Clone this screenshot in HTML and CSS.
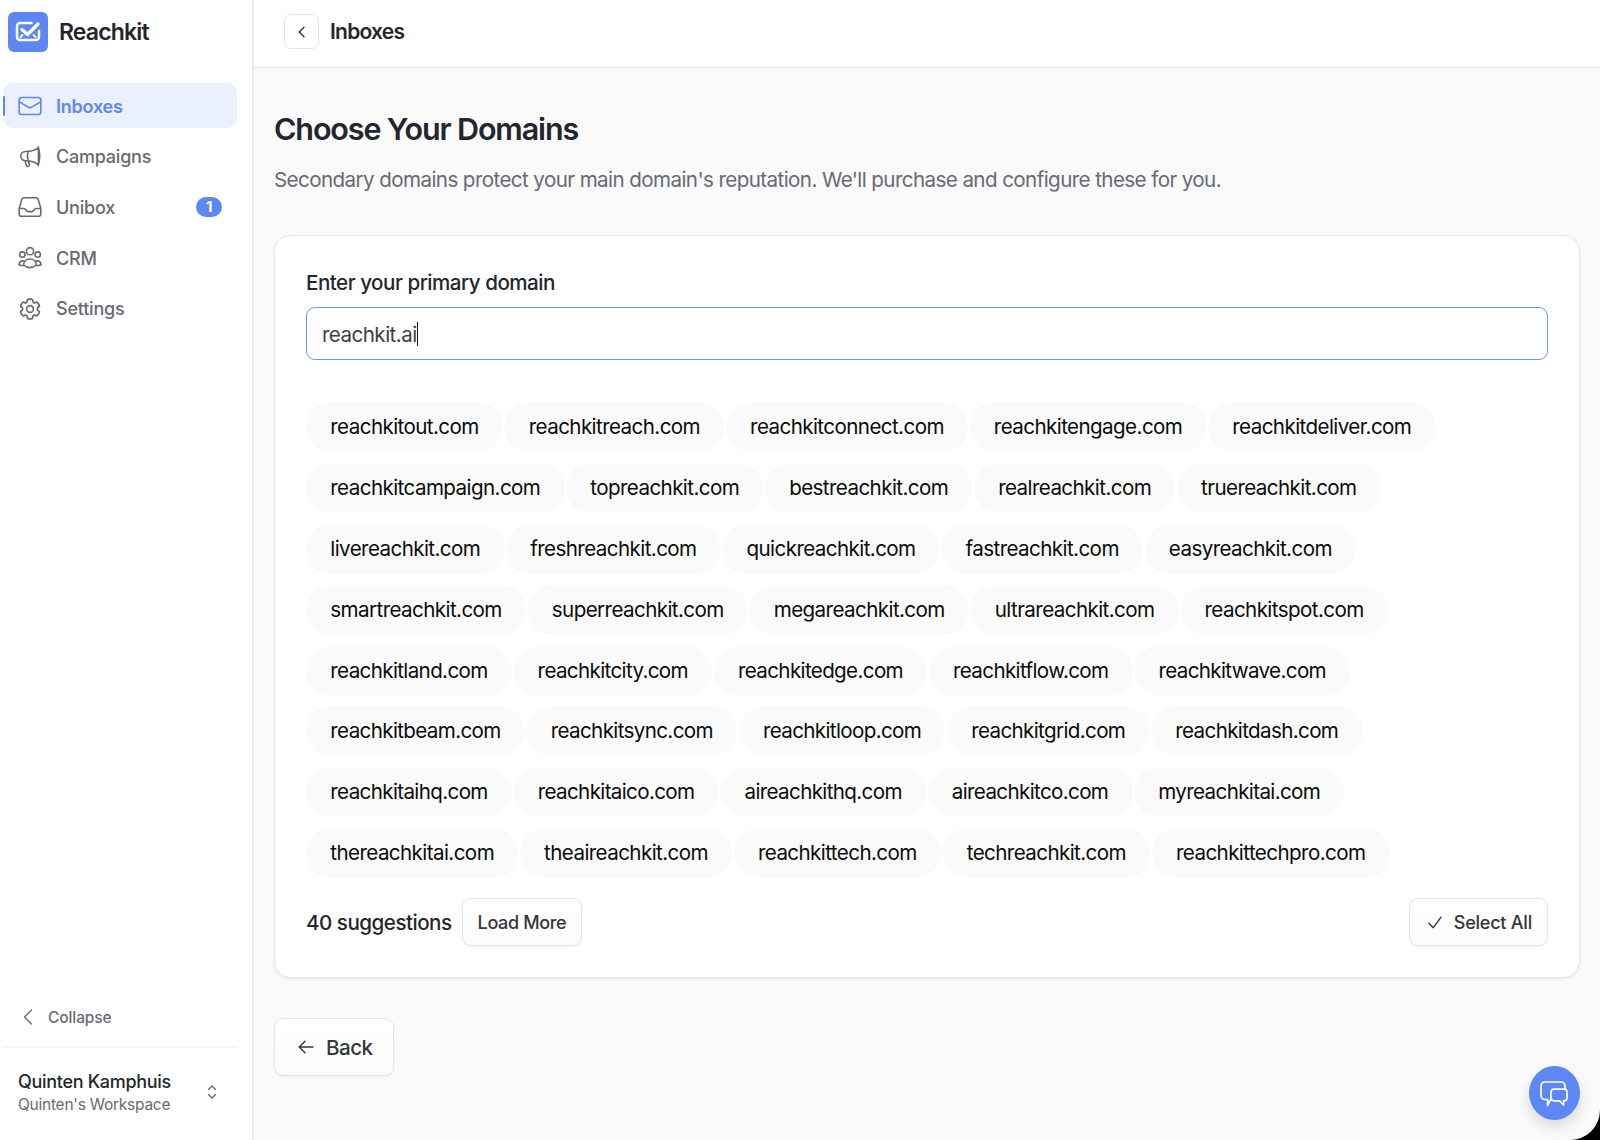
FILE: index.html
```html
<!DOCTYPE html>
<html lang="en">
<head>
    <meta charset="UTF-8">
    <meta name="viewport" content="width=device-width, initial-scale=1.0">
    <title>Reachkit - Inboxes</title>
    <link rel="stylesheet" href="styles.css">
</head>
<body>
    <div class="app">
        <!-- Sidebar -->
        <aside class="sidebar">
            <div class="brand">
                <span class="brand-logo">
                    <svg width="26" height="22" viewBox="0 0 26 22">
                        <path d="M16.500 2H5a3 3 0 0 0-3 3v11a3 3 0 0 0 3 3h16a3 3 0 0 0 3-3V10"/>
                        <path class="check" d="M7 8.500l5.500 5L23 3"/>
                        <path class="fold" d="M5.500 16l2-2M20.500 16l-2-2"/>
                    </svg>
                </span>
                <span class="brand-name">Reachkit</span>
            </div>

            <nav class="nav">
                <a class="nav-item active">
                    <svg class="icon" viewBox="0 0 24 24"><rect x="1.200" y="3.500" width="21.600" height="17" rx="2.500"/><path d="M1.200 7.800l9.100 5.300a3.300 3.300 0 0 0 3.400 0l9.100-5.300"/></svg>
                    <span>Inboxes</span>
                </a>
                <a class="nav-item">
                    <svg class="icon" viewBox="0 0 24 24"><path d="M10.300 15.800c-.7-.1-1.400-.1-2.100-.1h-.8a4.600 4.600 0 0 1 0-9.200h.8c4.400 0 8.600-1.300 12.300-3.700v16.700a22.500 22.500 0 0 0-10.200-3.700zM10.300 15.800c-1-3-1-6.500 0-9.400M7.200 15.700c.2 1.900.7 3.500 1.300 5 .3.700 1 1 1.600.6l.8-.4c.5-.3.7-.9.5-1.500-.5-1.100-.8-2.300-1.100-3.600M20.200 1.800c1.900 5.900 1.900 12.800 0 18.800"/></svg>
                    <span>Campaigns</span>
                </a>
                <a class="nav-item">
                    <svg class="icon" viewBox="0 0 24 24"><path d="M1.200 13.500h4.600c.9 0 1.700.5 2.100 1.300l.3.600c.4.800 1.200 1.200 2.100 1.200h3.400c.9 0 1.700-.4 2.100-1.200l.3-.6c.4-.8 1.200-1.300 2.100-1.300h4.600M1.200 13.800v5.100c0 1.300 1 2.300 2.300 2.300h17c1.300 0 2.300-1 2.300-2.300v-5.100c0-.3 0-.5-.1-.7L20.200 4.400A2.400 2.400 0 0 0 18 2.800H6a2.400 2.400 0 0 0-2.200 1.600l-2.500 8.700-.1.700z"/></svg>
                    <span>Unibox</span>
                    <span class="badge">1</span>
                </a>
                <a class="nav-item">
                    <svg class="icon" viewBox="0 0 24 24"><circle cx="12" cy="5.200" r="3.600"/><circle cx="4.300" cy="8.600" r="2.700"/><circle cx="19.700" cy="8.600" r="2.700"/><path d="M5.600 19c0-3.600 2.800-6 6.400-6s6.400 2.400 6.400 6c-4 3.200-8.800 3.200-12.800 0zM6.800 15.600c-2.900-1.700-5.600-.2-5.900 3.100 1.800.9 3.200 1.100 4.800.6M17.200 15.600c2.900-1.700 5.600-.2 5.900 3.100-1.800.9-3.200 1.100-4.800.6"/></svg>
                    <span>CRM</span>
                </a>
                <a class="nav-item">
                    <svg class="icon" viewBox="0 0 24 24"><path d="M9.600 3.900c.1-.5.500-.9 1.100-.9h2.600c.5 0 1 .4 1.100.9l.2 1.300c.1.400.3.700.6.900l.2.100c.4.200.8.200 1.100.1l1.200-.5c.5-.2 1.100 0 1.400.5l1.300 2.200c.3.500.2 1.100-.3 1.400l-1 .8c-.3.300-.4.600-.4 1v.3c0 .4.100.7.400 1l1 .8c.4.400.5 1 .3 1.400l-1.300 2.300c-.3.500-.9.700-1.400.5l-1.200-.5c-.4-.1-.8-.1-1.100.1l-.2.100c-.3.200-.5.500-.6.900l-.2 1.300c-.1.500-.5.900-1.100.9h-2.600c-.5 0-1-.4-1.100-.9l-.2-1.300c-.1-.4-.3-.7-.6-.9l-.2-.1c-.4-.2-.8-.2-1.100-.1l-1.200.5c-.5.200-1.100 0-1.400-.5l-1.300-2.300c-.3-.5-.2-1.100.3-1.400l1-.8c.3-.3.4-.6.4-1v-.3c0-.4-.1-.7-.4-1l-1-.8c-.4-.4-.5-1-.3-1.400l1.300-2.200c.3-.5.900-.7 1.400-.5l1.200.5c.4.100.8.100 1.100-.1l.2-.1c.3-.2.500-.5.600-.9z" transform="translate(-1.200 -1.100) scale(1.100)"/><circle cx="12" cy="12" r="3.400"/></svg>
                    <span>Settings</span>
                </a>
            </nav>

            <div class="sidebar-bottom">
                <a class="collapse">
                    <svg width="10" height="16" viewBox="0 0 10 16"><path d="M8.500 1L1.500 8l7 7"/></svg>
                    <span>Collapse</span>
                </a>
                <div class="account">
                    <div class="account-text">
                        <div class="account-name">Quinten Kamphuis</div>
                        <div class="account-workspace">Quinten's Workspace</div>
                    </div>
                    <svg width="10" height="14" viewBox="0 0 10 14"><path d="M1.500 4.500L5 1l3.500 3.500M1.500 9.500L5 13l3.500-3.500"/></svg>
                </div>
            </div>
        </aside>

        <!-- Main -->
        <main class="main">
            <header class="topbar">
                <button class="topbar-back">
                    <svg width="8" height="12" viewBox="0 0 8 12"><path d="M6 1.200L1.200 6 6 10.800"/></svg>
                </button>
                <span class="topbar-title">Inboxes</span>
            </header>

            <div class="content">
                <h1>Choose Your Domains</h1>
                <p class="subtitle">Secondary domains protect your main domain's reputation. We'll purchase and configure these for you.</p>

                <section class="card">
                    <div class="label">Enter your primary domain</div>
                    <div class="input"><span>reachkit.ai</span><i class="caret"></i></div>

                    <div class="domains">
                        <div class="row"><span class="chip">reachkitout.com</span><span class="chip">reachkitreach.com</span><span class="chip">reachkitconnect.com</span><span class="chip">reachkitengage.com</span><span class="chip">reachkitdeliver.com</span></div>
                        <div class="row"><span class="chip">reachkitcampaign.com</span><span class="chip">topreachkit.com</span><span class="chip">bestreachkit.com</span><span class="chip">realreachkit.com</span><span class="chip">truereachkit.com</span></div>
                        <div class="row"><span class="chip">livereachkit.com</span><span class="chip">freshreachkit.com</span><span class="chip">quickreachkit.com</span><span class="chip">fastreachkit.com</span><span class="chip">easyreachkit.com</span></div>
                        <div class="row"><span class="chip">smartreachkit.com</span><span class="chip">superreachkit.com</span><span class="chip">megareachkit.com</span><span class="chip">ultrareachkit.com</span><span class="chip">reachkitspot.com</span></div>
                        <div class="row tight"><span class="chip">reachkitland.com</span><span class="chip">reachkitcity.com</span><span class="chip">reachkitedge.com</span><span class="chip">reachkitflow.com</span><span class="chip">reachkitwave.com</span></div>
                        <div class="row tight"><span class="chip">reachkitbeam.com</span><span class="chip">reachkitsync.com</span><span class="chip">reachkitloop.com</span><span class="chip">reachkitgrid.com</span><span class="chip">reachkitdash.com</span></div>
                        <div class="row tight"><span class="chip">reachkitaihq.com</span><span class="chip">reachkitaico.com</span><span class="chip">aireachkithq.com</span><span class="chip">aireachkitco.com</span><span class="chip">myreachkitai.com</span></div>
                        <div class="row"><span class="chip">thereachkitai.com</span><span class="chip">theaireachkit.com</span><span class="chip">reachkittech.com</span><span class="chip">techreachkit.com</span><span class="chip">reachkittechpro.com</span></div>
                    </div>

                    <div class="card-footer">
                        <span class="count">40 suggestions</span>
                        <button class="btn btn-more">Load More</button>
                        <button class="btn btn-select">
                            <svg width="14" height="13" viewBox="0 0 14 13"><path d="M1 7.200l4.200 4.600L13 1.200"/></svg>
                            Select All
                        </button>
                    </div>
                </section>

                <button class="btn btn-back">
                    <svg width="16" height="14" viewBox="0 0 16 14"><path d="M15 7H1.500M7 1.200L1.200 7 7 12.800"/></svg>
                    Back
                </button>
            </div>
        </main>
    </div>

    <!-- Chat launcher -->
    <button class="chat">
        <svg width="28" height="26" viewBox="0 0 28 26">
            <path d="M10.500 18.500L7.600 24.500v-6H5a4 4 0 0 1-4-4V5a4 4 0 0 1 4-4h16a4 4 0 0 1 4 4v3"/>
            <path d="M14 8.200h10a3 3 0 0 1 3 3v5.600a3 3 0 0 1-3 3h-.4v4.200l-4-4.200H14a3 3 0 0 1-3-3v-5.600a3 3 0 0 1 3-3z"/>
        </svg>
    </button>
</body>
</html>
```
FILE: styles.css
```css
* {
    margin: 0;
    padding: 0;
    box-sizing: border-box;
}
html, body {
    width: 100%;
    height: 100%;
    overflow: hidden;
    background-color: #000;
    font-family: Inter, "Liberation Sans", sans-serif;
    color: #24262f;
}
svg {
    flex-shrink: 0;
    fill: none;
    stroke: currentColor;
    stroke-width: 1.4;
    stroke-linecap: round;
    stroke-linejoin: round;
}
button {
    font-family: inherit;
    color: #34363b;
}
.app {
    display: flex;
    height: 100vh;
    background: #fafafb;
    border-bottom-right-radius: 30px;
    overflow: hidden;
}

/* Sidebar */
.sidebar {
    width: 254px;
    flex-shrink: 0;
    display: flex;
    flex-direction: column;
    background: #fff;
    border-right: 2px solid #ececee;
    padding: 12px 15px 24px 3px;
}
.brand {
    display: flex;
    align-items: center;
    gap: 11px;
    padding-left: 5px;
}
.brand-logo {
    width: 40px;
    height: 40px;
    display: flex;
    align-items: center;
    justify-content: center;
    border-radius: 6px;
    background: #5d87f5;
    color: #fff;
}
.brand-logo svg {
    stroke-width: 2.5;
}
.brand-logo .check {
    stroke-width: 3.4;
}
.brand-logo .fold {
    stroke-width: 1.8;
}
.brand-name {
    font-size: 23px;
    font-weight: 600;
    letter-spacing: -0.85px;
}
.nav {
    display: flex;
    flex-direction: column;
    gap: 5.7px;
    margin-top: 31px;
}
.nav-item {
    position: relative;
    display: flex;
    align-items: center;
    gap: 14px;
    height: 45px;
    padding: 1px 15px 0;
    border-radius: 10px;
    font-size: 18px;
    font-weight: 500;
    letter-spacing: -0.22px;
    color: #676a75;
}
.nav-item.active {
    background: #ebf0fe;
    color: #5d87f5;
    font-weight: 600;
}
.nav-item.active::before {
    content: "";
    position: absolute;
    left: 0;
    top: 13px;
    width: 2px;
    height: 20px;
    border-radius: 1px;
    background: #5d87f5;
}
.icon {
    width: 24px;
    height: 24px;
    stroke-width: 1.6;
}
.badge {
    margin-left: auto;
    width: 26px;
    height: 20px;
    border-radius: 10px;
    background: #5d87f5;
    color: #fff;
    font-size: 15px;
    font-weight: 700;
    line-height: 20px;
    text-align: center;
}
.sidebar-bottom {
    margin-top: auto;
}
.collapse {
    display: flex;
    align-items: center;
    gap: 15px;
    height: 30px;
    padding-left: 20px;
    margin-bottom: 15px;
    font-size: 15.5px;
    font-weight: 500;
    letter-spacing: -0.1px;
    color: #676a75;
}
.account {
    display: flex;
    align-items: center;
    justify-content: space-between;
    border-top: 1px solid #f1f1f3;
    padding: 22px 20px 0 15px;
    color: #676a75;
}
.account svg {
    margin-bottom: 2px;
}
.account-name {
    font-size: 18px;
    font-weight: 500;
    line-height: 24px;
    letter-spacing: -0.3px;
    color: #24262f;
}
.account-workspace {
    font-size: 15.5px;
    line-height: 22px;
    letter-spacing: -0.25px;
}

/* Top bar */
.main {
    flex: 1;
    min-width: 0;
}
.topbar {
    display: flex;
    align-items: center;
    gap: 11px;
    height: 68px;
    padding: 0 30px 4px;
    background: #fff;
    border-bottom: 1px solid #e4e4e7;
}
.topbar-back {
    width: 35px;
    height: 35px;
    display: flex;
    align-items: center;
    justify-content: center;
    border: 1px solid #e7e7ea;
    border-radius: 7px;
    background: #fff;
}
.topbar-title {
    font-size: 21px;
    font-weight: 600;
    letter-spacing: -0.75px;
}

/* Content */
.content {
    padding: 40px 20px 0;
}
h1 {
    font-size: 30.5px;
    font-weight: 600;
    line-height: 42px;
    letter-spacing: -1.13px;
}
.subtitle {
    margin-top: 15px;
    font-size: 20.6px;
    line-height: 30px;
    letter-spacing: -0.59px;
    color: #676a75;
    white-space: nowrap;
}
.card {
    height: 743px;
    margin-top: 40px;
    padding: 32px 31px 31px;
    background: #fff;
    border: 1px solid #e6e6e9;
    border-radius: 16px;
    box-shadow: 0 1px 3px rgba(0, 0, 0, 0.07);
}
.label {
    font-size: 20.6px;
    font-weight: 500;
    line-height: 30px;
    letter-spacing: -0.5px;
}
.input {
    display: flex;
    align-items: center;
    height: 53px;
    margin-top: 9px;
    padding: 1px 15px 0;
    border: 1.5px solid #7096ee;
    border-radius: 9px;
    font-size: 20.6px;
    letter-spacing: -0.55px;
    color: #3d3f45;
}
.caret {
    width: 1px;
    height: 24px;
    background: #111;
}
.domains {
    display: flex;
    flex-direction: column;
    gap: 10.9px;
    margin-top: 42px;
}
.row {
    display: flex;
    gap: 1.4px;
    letter-spacing: -0.59px;
}
.row.tight {
    letter-spacing: -0.64px;
}
.chip {
    height: 50px;
    padding: 0 24.3px;
    border-radius: 25px;
    background: #fafafa;
    font-size: 20.6px;
    line-height: 50px;
    color: #0b0b0c;
    white-space: nowrap;
}
.card-footer {
    display: flex;
    align-items: center;
    margin-top: 20px;
}
.count {
    margin-right: 10px;
    font-size: 20.6px;
    font-weight: 500;
    letter-spacing: -0.5px;
}
.btn {
    display: flex;
    align-items: center;
    height: 48px;
    padding: 0 15px;
    border: 1px solid #e4e4e7;
    border-radius: 9px;
    background: linear-gradient(#fff, #fcfcfd);
    box-shadow: 0 1px 2px rgba(0, 0, 0, 0.05);
    font-size: 18px;
    font-weight: 500;
    letter-spacing: -0.22px;
}
.btn-more {
    letter-spacing: -0.36px;
}
.btn-select {
    margin-left: auto;
    gap: 12px;
    padding-left: 18px;
}
.btn-back {
    gap: 12px;
    height: 58px;
    margin-top: 40px;
    padding: 0 20px 0 23px;
    font-size: 20.6px;
    letter-spacing: -0.5px;
}

/* Chat launcher */
.chat {
    position: absolute;
    right: 20px;
    bottom: 20px;
    width: 51px;
    height: 54px;
    display: flex;
    align-items: center;
    justify-content: center;
    padding: 2px 1px 0 0;
    border: none;
    border-radius: 50%;
    background: #5d87f5;
    box-shadow: 0 6px 14px rgba(0, 0, 0, 0.14);
    color: #fff;
}
.chat svg {
    stroke-width: 1.7;
}
```
